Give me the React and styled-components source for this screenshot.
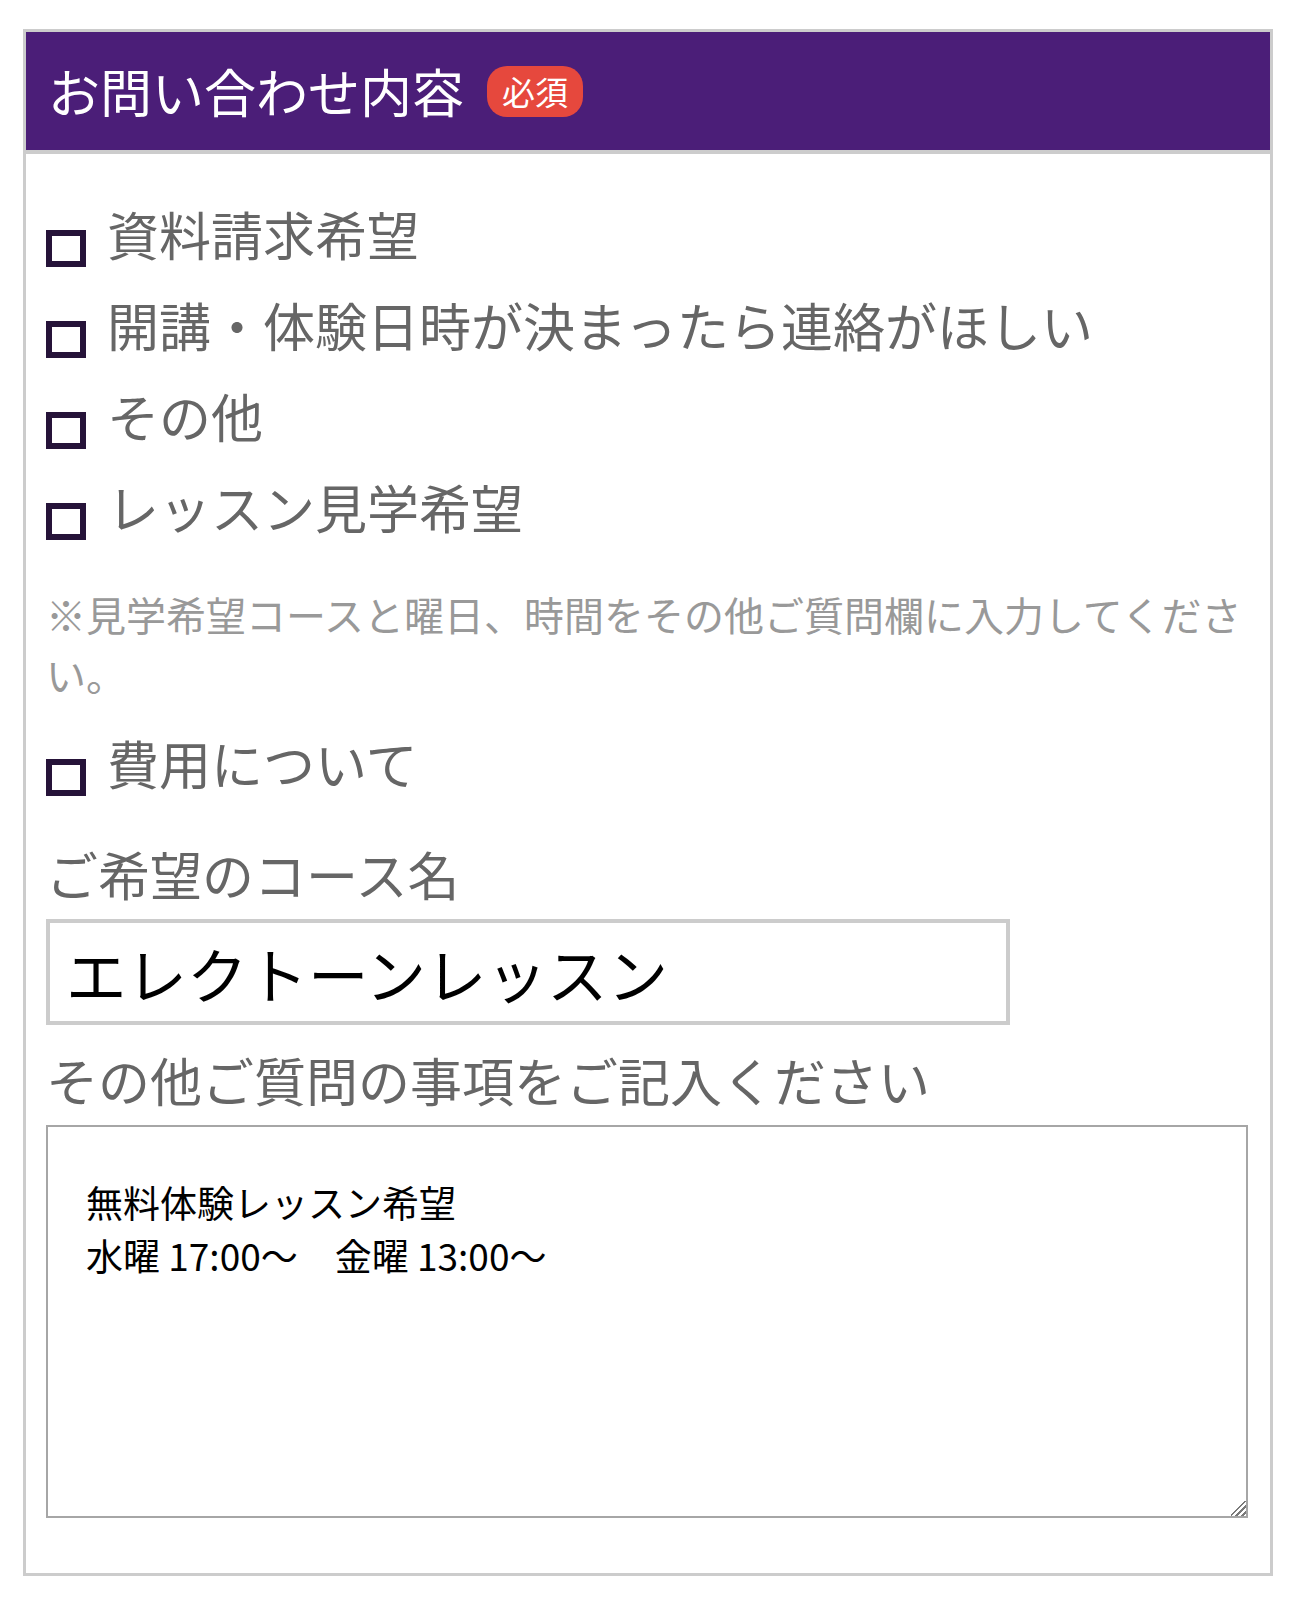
import React, { useState } from "react";
import styled, { createGlobalStyle } from "styled-components";

const GlobalStyle = createGlobalStyle`
  body {
    margin: 0;
    background: #fff;
    font-family: "Noto Sans CJK JP", "Noto Sans", sans-serif;
  }
`;

const Panel = styled.section`
  width: 1250px;
  margin: 29px 0 0 23px;
  border: 3px solid #cccccc;
  box-sizing: border-box;
  background: #fff;
`;

const Header = styled.div`
  display: flex;
  align-items: center;
  height: 118px;
  padding: 0 22px;
  background: #4b1e78;
  border-bottom: 4px solid #cccccc;
`;

const Title = styled.h2`
  margin: 0;
  font-size: 52px;
  line-height: 1;
  font-weight: 400;
  color: #fff;
  white-space: nowrap;
`;

const Badge = styled.span`
  display: inline-flex;
  align-items: center;
  justify-content: center;
  width: 96px;
  height: 51px;
  margin-left: 23px;
  border-radius: 20px;
  background: #e6483d;
  color: #fff;
  font-size: 33px;
  line-height: 1;
`;

const Body = styled.div`
  padding: 0 22px 55px 20px;
`;

const CheckList = styled.div`
  display: flex;
  flex-direction: column;
  gap: 32px;
  padding-top: 54px;
`;

const CheckRow = styled.label`
  display: flex;
  align-items: flex-start;
  gap: 21px;
  margin-top: ${({ $gap }) => $gap || 0}px;
  cursor: pointer;
`;

const Box = styled.input`
  appearance: none;
  flex: none;
  width: 40px;
  height: 37px;
  margin: 22px 0 0;
  border: 6px solid #261339;
  box-sizing: border-box;
  background: #fff;
  &:checked {
    background: #4b1e78;
  }
`;

const CheckText = styled.span`
  font-size: 52px;
  line-height: 52px;
  color: #666666;
  white-space: nowrap;
`;

const Note = styled.p`
  margin: 44px 0 0;
  font-size: 40px;
  line-height: 60px;
  color: #999999;
`;

const FieldLabel = styled.div`
  margin-top: ${({ $top }) => $top}px;
  font-size: 52px;
  line-height: 52px;
  color: #666666;
  white-space: nowrap;
`;

const TextInput = styled.input`
  display: block;
  width: 964px;
  height: 106px;
  margin-top: 19px;
  padding: 0 16px;
  border: 4px solid #cccccc;
  box-sizing: border-box;
  font-family: "Noto Sans CJK JP", sans-serif;
  font-size: 60.5px;
  color: #000;
  outline: none;
`;

const TextArea = styled.textarea`
  display: block;
  width: 100%;
  height: 393px;
  margin-top: 19px;
  padding: 49px 38px;
  border: 2px solid #a6a6a6;
  box-sizing: border-box;
  font-family: "Noto Sans CJK JP", sans-serif;
  font-size: 37px;
  line-height: 53px;
  color: #000;
  outline: none;
  &::-webkit-resizer {
    background: linear-gradient(
      135deg,
      transparent 0 44%,
      #7a7a7a 44% 52%,
      transparent 52% 63%,
      #7a7a7a 63% 71%,
      transparent 71% 82%,
      #7a7a7a 82% 90%,
      transparent 90%
    );
  }
`;

const topics = [
  "資料請求希望",
  "開講・体験日時が決まったら連絡がほしい",
  "その他",
  "レッスン見学希望",
];

const App = () => {
  const [checked, setChecked] = useState({});
  const [course, setCourse] = useState("エレクトーンレッスン");
  const [message, setMessage] = useState(
    "無料体験レッスン希望\n水曜 17:00～　金曜 13:00～"
  );

  const toggle = (key) => {
    setChecked({ ...checked, [key]: !checked[key] });
  };

  return (
    <>
      <GlobalStyle />
      <Panel>
        <Header>
          <Title>お問い合わせ内容</Title>
          <Badge>必須</Badge>
        </Header>
        <Body>
          <CheckList>
            {topics.map((t) => (
              <CheckRow key={t}>
                <Box
                  type="checkbox"
                  checked={!!checked[t]}
                  onChange={() => toggle(t)}
                />
                <CheckText>{t}</CheckText>
              </CheckRow>
            ))}
          </CheckList>
          <Note>
            ※見学希望コースと曜日、時間をその他ご質問欄に入力してください。
          </Note>
          <CheckRow $gap={33}>
            <Box
              type="checkbox"
              checked={!!checked.cost}
              onChange={() => toggle("cost")}
            />
            <CheckText>費用について</CheckText>
          </CheckRow>
          <FieldLabel $top={52}>ご希望のコース名</FieldLabel>
          <TextInput
            type="text"
            value={course}
            onChange={(e) => setCourse(e.target.value)}
          />
          <FieldLabel $top={29}>その他ご質問の事項をご記入ください</FieldLabel>
          <TextArea
            value={message}
            onChange={(e) => setMessage(e.target.value)}
          />
        </Body>
      </Panel>
    </>
  );
};

export default App;
